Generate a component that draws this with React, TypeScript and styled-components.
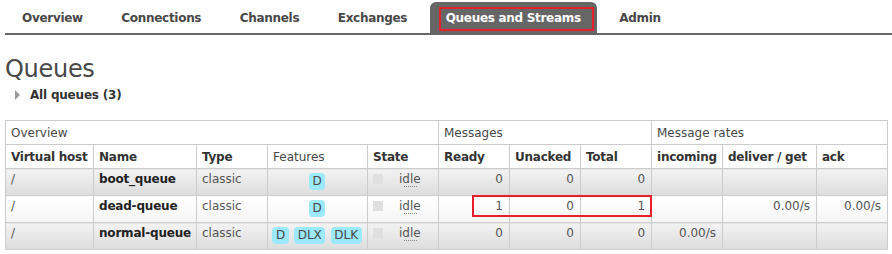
import React from "react";
import styled, { createGlobalStyle, css } from "styled-components";

const GlobalStyle = createGlobalStyle`
  html, body { margin: 0; padding: 0; background: #fff; }
  body {
    font-family: "DejaVu Sans", Verdana, sans-serif;
    font-size: 12px;
    line-height: 14px;
    color: #484848;
  }
`;

const Page = styled.div`
  padding-left: 5px;
`;

const Nav = styled.ul`
  display: flex;
  gap: 6.5px;
  list-style: none;
  margin: 0;
  padding: 2px 0 0 1px;
  border-bottom: 2px solid #666;
`;

const Tab = styled.li<{ $active?: boolean }>`
  position: relative;
  height: 31px;
  line-height: 32px;
  padding: 0 16px;
  font-weight: bold;
  letter-spacing: -0.3px;
  color: #484848;
  border-radius: 6px 6px 0 0;
  white-space: nowrap;
  ${(p) =>
    p.$active &&
    css`
      background: #666;
      color: #fff;
    `}
`;

const Highlight = styled.span<{ $l: number; $t: number; $r?: number; $b?: number; $w?: number; $h?: number }>`
  position: absolute;
  box-sizing: border-box;
  border: 2px solid #e8202a;
  pointer-events: none;
  left: ${(p) => p.$l}px;
  top: ${(p) => p.$t}px;
  ${(p) => (p.$r !== undefined ? `right: ${p.$r}px;` : "")}
  ${(p) => (p.$b !== undefined ? `bottom: ${p.$b}px;` : "")}
  ${(p) => (p.$w !== undefined ? `width: ${p.$w}px;` : "")}
  ${(p) => (p.$h !== undefined ? `height: ${p.$h}px;` : "")}
`;

const Title = styled.h1`
  margin: 20px 0 0;
  font-size: 24px;
  line-height: 28px;
  font-weight: normal;
  letter-spacing: -0.3px;
  color: #484848;
`;

const Toggle = styled.h2`
  display: flex;
  align-items: center;
  margin: 5px 0 0;
  padding-left: 10px;
  font-size: 12px;
  line-height: 14px;
  font-weight: bold;
  letter-spacing: -0.2px;
  color: #333;
`;

const Arrow = styled.span`
  width: 0;
  height: 0;
  border-left: 5px solid #9a9a9a;
  border-top: 5px solid transparent;
  border-bottom: 5px solid transparent;
  margin-right: 10px;
`;

const TableWrap = styled.div`
  position: relative;
  margin-top: 18px;
  width: 882px;
`;

const Table = styled.table`
  width: 882px;
  border-collapse: collapse;
  table-layout: fixed;
`;

const GroupTh = styled.th`
  text-align: left;
  font-weight: normal;
  padding: 5px 5px 4px;
  border: 1px solid #ccc;
  background: #fff;
  color: #484848;
  white-space: nowrap;
`;

const HeadTh = styled.th<{ $plain?: boolean }>`
  text-align: left;
  font-weight: ${(p) => (p.$plain ? "normal" : "bold")};
  letter-spacing: ${(p) => (p.$plain ? "0" : "-0.25px")};
  padding: 5px 5px 4px;
  border: 1px solid #ccc;
  background: #fff;
  color: ${(p) => (p.$plain ? "#484848" : "#333")};
  white-space: nowrap;
`;

const Td = styled.td<{ $alt: boolean; $align?: "left" | "right" | "center"; $strong?: boolean }>`
  vertical-align: top;
  padding: 3px 6px 5px 5px;
  border: 1px solid #ccc;
  white-space: nowrap;
  text-align: ${(p) => p.$align || "left"};
  font-weight: ${(p) => (p.$strong ? "bold" : "normal")};
  letter-spacing: ${(p) => (p.$strong ? "-0.2px" : "0")};
  color: ${(p) => (p.$strong ? "#222" : "#555")};
  background: ${(p) =>
    p.$alt
      ? "linear-gradient(to bottom, #f3f3f3 0%, #dcdcdc 100%)"
      : "linear-gradient(to bottom, #ffffff 0%, #f5f5f5 100%)"};
`;

const Badges = styled.div`
  display: flex;
  justify-content: center;
  gap: 5.5px;
`;

const Badge = styled.span`
  display: inline-block;
  margin-top: 1px;
  height: 17px;
  line-height: 17px;
  padding: 0 3.5px;
  border-radius: 4px;
  background: #9ce9fc;
  color: #484848;
`;

const StateBox = styled.div`
  display: flex;
  align-items: flex-start;
`;

const StateDot = styled.span`
  width: 10px;
  height: 10px;
  margin-top: 2px;
  margin-right: 16px;
  background: #e0e0e0;
`;

const StateLabel = styled.abbr`
  position: relative;
  text-decoration: none;
  color: #555;
  &::after {
    content: "";
    position: absolute;
    left: 5px;
    right: 4px;
    bottom: -1px;
    border-bottom: 1px dotted #888;
  }
`;

const widths = [88, 103, 71, 100, 71, 71, 71, 71, 71, 94, 71];

const tabs = ["Overview", "Connections", "Channels", "Exchanges", "Queues and Streams", "Admin"];

type Row = {
  vhost: string;
  name: string;
  type: string;
  features: string[];
  state: string;
  ready: string;
  unacked: string;
  total: string;
  incoming: string;
  deliver: string;
  ack: string;
};

const rows: Row[] = [
  { vhost: "/", name: "boot_queue", type: "classic", features: ["D"], state: "idle", ready: "0", unacked: "0", total: "0", incoming: "", deliver: "", ack: "" },
  { vhost: "/", name: "dead-queue", type: "classic", features: ["D"], state: "idle", ready: "1", unacked: "0", total: "1", incoming: "", deliver: "0.00/s", ack: "0.00/s" },
  { vhost: "/", name: "normal-queue", type: "classic", features: ["D", "DLX", "DLK"], state: "idle", ready: "0", unacked: "0", total: "0", incoming: "0.00/s", deliver: "", ack: "" },
];

export default function App() {
  return (
    <>
      <GlobalStyle />
      <Page>
        <Nav>
          {tabs.map((t) => (
            <Tab key={t} $active={t === "Queues and Streams"}>
              {t}
              {t === "Queues and Streams" && <Highlight $l={9} $t={5} $r={3} $b={2} />}
            </Tab>
          ))}
        </Nav>
        <Title>Queues</Title>
        <Toggle>
          <Arrow />
          All queues (3)
        </Toggle>
        <TableWrap>
          <Table>
            <colgroup>
              {widths.map((w, i) => (
                <col key={i} style={{ width: w }} />
              ))}
            </colgroup>
            <thead>
              <tr>
                <GroupTh colSpan={5}>Overview</GroupTh>
                <GroupTh colSpan={3}>Messages</GroupTh>
                <GroupTh colSpan={3}>Message rates</GroupTh>
              </tr>
              <tr>
                <HeadTh>Virtual host</HeadTh>
                <HeadTh>Name</HeadTh>
                <HeadTh>Type</HeadTh>
                <HeadTh $plain>Features</HeadTh>
                <HeadTh>State</HeadTh>
                <HeadTh>Ready</HeadTh>
                <HeadTh>Unacked</HeadTh>
                <HeadTh>Total</HeadTh>
                <HeadTh>incoming</HeadTh>
                <HeadTh>deliver / get</HeadTh>
                <HeadTh>ack</HeadTh>
              </tr>
            </thead>
            <tbody>
              {rows.map((r, i) => {
                const alt = i % 2 === 0;
                return (
                  <tr key={r.name}>
                    <Td $alt={alt}>{r.vhost}</Td>
                    <Td $alt={alt} $strong>{r.name}</Td>
                    <Td $alt={alt}>{r.type}</Td>
                    <Td $alt={alt}>
                      <Badges>
                        {r.features.map((f) => (
                          <Badge key={f}>{f}</Badge>
                        ))}
                      </Badges>
                    </Td>
                    <Td $alt={alt}>
                      <StateBox>
                        <StateDot />
                        <StateLabel>{r.state}</StateLabel>
                      </StateBox>
                    </Td>
                    <Td $alt={alt} $align="right">{r.ready}</Td>
                    <Td $alt={alt} $align="right">{r.unacked}</Td>
                    <Td $alt={alt} $align="right">{r.total}</Td>
                    <Td $alt={alt} $align="right">{r.incoming}</Td>
                    <Td $alt={alt} $align="right">{r.deliver}</Td>
                    <Td $alt={alt} $align="right">{r.ack}</Td>
                  </tr>
                );
              })}
            </tbody>
          </Table>
          <Highlight $l={467} $t={75} $w={180} $h={22} />
        </TableWrap>
      </Page>
    </>
  );
}
